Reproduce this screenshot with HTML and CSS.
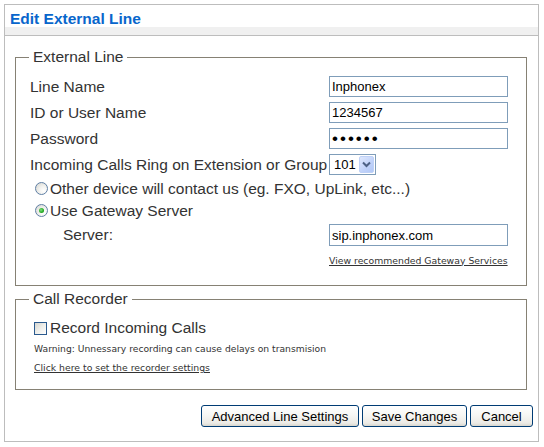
FILE: index.html
```html
<!DOCTYPE html>
<html>
<head>
<meta charset="utf-8">
<link rel="stylesheet" href="styles.css">
</head>
<body>
<div class="panel">
  <div class="panel-head">
    <div class="panel-title">Edit External Line</div>
    <div class="panel-band"></div>
  </div>

  <fieldset class="group group-line">
    <legend>External Line</legend>
    <div class="rows">
      <div class="row">
        <span class="label">Line Name</span>
        <input class="field" type="text" value="Inphonex">
      </div>
      <div class="row">
        <span class="label">ID or User Name</span>
        <input class="field" type="text" value="1234567">
      </div>
      <div class="row">
        <span class="label">Password</span>
        <input class="field field-pass" type="password" value="secret">
      </div>
      <div class="row">
        <span class="label">Incoming Calls Ring on Extension or Group</span>
        <div class="select-wrap">
          <select class="select"><option>101</option></select>
          <span class="select-btn">
            <svg width="9" height="7" viewBox="0 0 9 7"><path d="M1 1.5 L4.5 5 L8 1.5" fill="none" stroke="#4d6185" stroke-width="2"/></svg>
          </span>
        </div>
      </div>
      <div class="row row-radio">
        <span class="radio"></span>
        <span class="radio-text">Other device will contact us (eg. FXO, UpLink, etc...)</span>
      </div>
      <div class="row row-radio">
        <span class="radio checked"></span>
        <span class="radio-text">Use Gateway Server</span>
      </div>
      <div class="row row-server">
        <span class="label label-server">Server:</span>
        <input class="field field-server" type="text" value="sip.inphonex.com">
      </div>
      <div class="row row-link">
        <a class="small-link" href="#">View recommended Gateway Services</a>
      </div>
    </div>
  </fieldset>

  <fieldset class="group group-rec">
    <legend>Call Recorder</legend>
    <div class="row row-check">
      <span class="checkbox"></span>
      <span class="check-text">Record Incoming Calls</span>
    </div>
    <div class="warning">Warning: Unnessary recording can cause delays on transmision</div>
    <div class="rec-link"><a class="small-link" href="#">Click here to set the recorder settings</a></div>
  </fieldset>

  <div class="actions">
    <button class="btn btn-adv">Advanced Line Settings</button>
    <button class="btn btn-save">Save Changes</button>
    <button class="btn btn-cancel">Cancel</button>
  </div>
</div>
</body>
</html>
```

FILE: styles.css
```css
html, body {
  margin: 0;
  padding: 0;
  background: #ffffff;
}

body {
  font-family: "Liberation Sans", Arial, sans-serif;
  color: #222222;
}

.panel {
  box-sizing: border-box;
  margin: 4px 0 0 4px;
  width: 535px;
  height: 438px;
  border: 1px solid #bdbdbd;
  display: flex;
  flex-direction: column;
}

.panel-head {
  display: flex;
  flex-direction: column;
}

.panel-title {
  height: 22px;
  box-sizing: border-box;
  padding: 6px 0 0 5px;
  line-height: 16px;
  font-size: 15.5px;
  font-weight: bold;
  color: #0866cc;
}

.panel-band {
  height: 8px;
  background: #f0f0f0;
  border-bottom: 1px solid #bdbdbd;
}

.group {
  margin: 12px 11px 0 10px;
  padding: 10px 14px 16px 14px;
  border: 1px solid #868174;
  min-width: 0;
}

.group legend {
  margin-left: -1px;
  padding: 0 4px;
  font-size: 15.5px;
  line-height: 18px;
  color: #333333;
}

.group-rec {
  margin-top: 4px;
  padding: 10px 14px 14px 14px;
}

.rows {
  display: flex;
  flex-direction: column;
  gap: 5px;
}

.row {
  display: flex;
  align-items: center;
  height: 21px;
}

.label {
  width: 299px;
  flex: none;
  font-size: 15.5px;
  color: #333333;
  white-space: nowrap;
}

.field {
  box-sizing: border-box;
  width: 179px;
  height: 21px;
  margin: 0;
  padding: 0 2px;
  border: 1px solid #7f9db9;
  font-family: "Liberation Sans", Arial, sans-serif;
  font-size: 13px;
  color: #000000;
  background: #ffffff;
  outline: none;
}

.field-pass {
  font-size: 17px;
  letter-spacing: 2px;
}

.select-wrap {
  position: relative;
  width: 47px;
  height: 21px;
}

.select {
  appearance: none;
  -webkit-appearance: none;
  box-sizing: border-box;
  width: 47px;
  height: 21px;
  margin: 0;
  padding: 0 0 0 4px;
  border: 1px solid #7f9db9;
  border-radius: 0;
  background: #ffffff;
  font-family: "Liberation Sans", Arial, sans-serif;
  font-size: 13px;
  color: #000000;
}

.select-btn {
  position: absolute;
  top: 2px;
  right: 2px;
  width: 15px;
  height: 17px;
  box-sizing: border-box;
  border: 1px solid #bfd1f7;
  border-radius: 2px;
  background: linear-gradient(135deg, #dfe8fd 0%, #c0d2fa 60%, #b2c8f6 100%);
  display: flex;
  align-items: center;
  justify-content: center;
  pointer-events: none;
}

.row-radio {
  height: 17px;
}

.radio {
  box-sizing: border-box;
  width: 13px;
  height: 13px;
  margin-left: 5px;
  margin-right: 2px;
  border-radius: 50%;
  border: 1px solid #5f7fa5;
  background: radial-gradient(circle at 70% 70%, #ffffff 0%, #f2f2ef 40%, #d4d4ce 100%);
  display: flex;
  align-items: center;
  justify-content: center;
  flex: none;
}

.radio.checked::after {
  content: "";
  width: 5px;
  height: 5px;
  border-radius: 50%;
  background: radial-gradient(circle at 40% 40%, #7ee07e 0%, #22a822 60%, #158a15 100%);
}

.radio-text {
  font-size: 15.5px;
  color: #333333;
  white-space: nowrap;
}

.row-server {
  height: 22px;
}

.label-server {
  width: 266px;
  padding-left: 33px;
}

.field-server {
  height: 22px;
}

.row-link {
  height: 18px;
  padding-left: 299px;
}

.small-link {
  font-family: "DejaVu Sans", Verdana, sans-serif;
  font-size: 9.3px;
  color: #333333;
  text-decoration: underline;
  white-space: nowrap;
}

.row-check {
  height: 20px;
}

.checkbox {
  box-sizing: border-box;
  width: 13px;
  height: 13px;
  margin-left: 4px;
  margin-right: 3px;
  border: 1px solid #2b5a8e;
  background: linear-gradient(135deg, #d6d6d0 0%, #eeeeea 50%, #ffffff 100%);
  flex: none;
}

.check-text {
  font-size: 15.5px;
  color: #333333;
}

.warning {
  margin-top: 4px;
  margin-left: 4px;
  font-family: "DejaVu Sans", Verdana, sans-serif;
  font-size: 9.2px;
  line-height: 14px;
  color: #333333;
  white-space: nowrap;
}

.rec-link {
  margin-top: 3px;
  margin-left: 4px;
  line-height: 14px;
}

.actions {
  display: flex;
  justify-content: flex-end;
  gap: 3px;
  margin-top: 15px;
  padding-right: 5px;
}

.btn {
  box-sizing: border-box;
  height: 22px;
  margin: 0;
  padding: 0;
  border: 1px solid #003c74;
  border-radius: 3px;
  background: linear-gradient(180deg, #ffffff 0%, #f7f7f4 45%, #ecebe6 85%, #d8d6ce 100%);
  font-family: "Liberation Sans", Arial, sans-serif;
  font-size: 13px;
  color: #000000;
  text-align: center;
}

.btn-adv {
  width: 158px;
}

.btn-save {
  width: 105px;
}

.btn-cancel {
  width: 63px;
}
```
